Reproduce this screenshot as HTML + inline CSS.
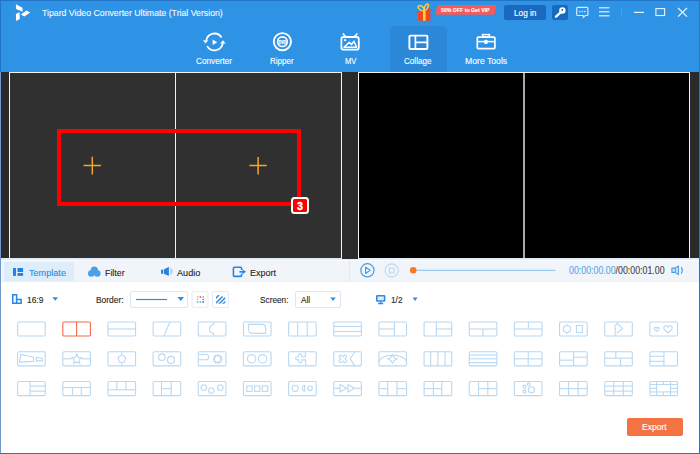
<!DOCTYPE html>
<html><head><meta charset="utf-8">
<style>
* { margin:0; padding:0; box-sizing:border-box; }
html, body { width:700px; height:454px; overflow:hidden; background:#fff; }
body { position:relative; font-family:"Liberation Sans", sans-serif; }
.abs { position:absolute; }
.t { position:absolute; white-space:nowrap; line-height:1; transform-origin:0 0; -webkit-text-stroke:0.12px currentColor; }
</style></head><body>
<!-- header -->
<div class="abs" style="left:0;top:0;width:700px;height:72px;background:#2f93e5"></div>
<div class="abs" style="left:0;top:0;width:700px;height:1px;background:#2274c9"></div>
<!-- active tab -->
<div class="abs" style="left:390px;top:26px;width:57px;height:46px;background:#2b87d8;border-radius:5px 5px 0 0"></div>

<!-- logo -->
<svg class="abs" style="left:0;top:0" width="40" height="26" viewBox="0 0 40 26">
 <g fill="#fff">
  <polygon points="15.9,4.2 22.4,7.8 22.7,11.8 16.1,9.1"/>
  <polygon points="20.8,14.4 26.4,10.5 30.3,12.6 24.3,16.5"/>
  <polygon points="15.9,13.9 19.5,12.0 19.8,18.9 16.1,21.0"/>
 </g>
</svg>
<div class="t" style="left:42.30px;top:8.95px;font-size:9.16px;color:#f2f8fe;transform:scaleX(0.954);">Tipard Video Converter Ultimate (Trial Version)</div>

<!-- gift + banner -->
<svg class="abs" style="left:410px;top:0" width="90" height="24" viewBox="410 0 90 24">
 <polygon points="437.3,5 496.7,5 494.4,14.8 435.4,14.8" fill="#f45b5b"/>
 <rect x="418" y="13" width="12.5" height="7.7" fill="#f5471f"/>
 <rect x="416.7" y="11" width="13" height="2.6" fill="#f5471f" transform="rotate(-4 423 12)"/>
 <path d="M425.5 11 l3.6 -3.4 l2.2 2.4 l-3.6 3z" fill="#f5471f"/>
 <rect x="423" y="10.5" width="2.6" height="10.2" fill="#fcd240"/>
 <ellipse cx="421.2" cy="8.2" rx="3.4" ry="1.9" transform="rotate(35 421.2 8.2)" fill="none" stroke="#fcd240" stroke-width="1.4"/>
 <ellipse cx="426.3" cy="7.0" rx="3.2" ry="1.6" transform="rotate(-62 426.3 7.0)" fill="none" stroke="#fcd240" stroke-width="1.4"/>
</svg>
<div class="t" style="left:440.60px;top:8.02px;font-size:5.52px;font-weight:bold;color:#fff;transform:scaleX(0.943);">50% OFF to Get VIP</div>

<!-- login + key -->
<div class="abs" style="left:504px;top:5px;width:42px;height:15px;background:#1a69bf;border-radius:2px"></div>
<div class="t" style="left:513.80px;top:9.02px;font-size:8.72px;color:#fff;transform:scaleX(0.943);">Log in</div>
<div class="abs" style="left:552px;top:5px;width:16px;height:15px;background:#1a69bf;border-radius:2px"></div>
<svg class="abs" style="left:548px;top:2px" width="22" height="22" viewBox="548 2 22 22">
 <path d="M560.6 12.4 L556.0 16.6" stroke="#fff" stroke-width="2.3" stroke-linecap="round"/>
 <circle cx="562.4" cy="10.5" r="3.2" fill="#fff"/>
 <circle cx="562.3" cy="10.0" r="0.9" fill="#1a69bf"/>
</svg>

<!-- chat, menu, sep, min, max, close -->
<svg class="abs" style="left:560px;top:0" width="140" height="26" viewBox="560 0 140 26" fill="none" stroke="#d6e8f9" stroke-width="1.2">
 <path d="M577.6 7.4 H587.0 Q587.9 7.4 587.9 8.3 V14.6 Q587.9 15.5 587.0 15.5 H585.2 L583.4 17.3 L583.2 15.5 H577.6 Q576.7 15.5 576.7 14.6 V8.3 Q576.7 7.4 577.6 7.4Z"/>
 <circle cx="579.7" cy="11.5" r="0.85" fill="#d6e8f9" stroke="none"/>
 <circle cx="582.3" cy="11.5" r="0.85" fill="#d6e8f9" stroke="none"/>
 <circle cx="584.9" cy="11.5" r="0.85" fill="#d6e8f9" stroke="none"/>
 <path d="M599 7.7 H609.5 M599 11.7 H609.5 M599 15.7 H609.5" stroke="#bfdbf5" stroke-width="1.4"/>
 <path d="M621.5 8 V16" stroke="#4f9fe6" stroke-width="1"/>
 <path d="M634 12.4 H644" stroke="#eaf4fd"/>
 <rect x="655.9" y="8.6" width="8.7" height="6.9" stroke="#eaf4fd" stroke-width="1.1"/>
 <path d="M678 8 L687 16.6 M687 8 L678 16.6" stroke="#eaf4fd"/>
</svg>

<!-- nav icons -->
<svg class="abs" style="left:180px;top:24px" width="340" height="32" viewBox="180 24 340 32" fill="none" stroke="#fff" stroke-width="1.7">
 <!-- converter -->
 <path d="M206.25 40.3 A8.4 8.4 0 0 1 221.6 37.45" stroke-width="1.8"/>
 <path d="M222.8 43.2 A8.4 8.4 0 0 1 207.2 46.1" stroke-width="1.8"/>
 <polygon points="203.0,40.2 208.2,40.2 205.5,43.6" fill="#fff" stroke="none"/>
 <polygon points="223.0,40.2 220.2,43.6 225.6,43.6" fill="#fff" stroke="none"/>
 <polygon points="212.6,39.5 217.3,42.2 212.6,44.9" fill="#fff" stroke="none"/>
 <!-- ripper -->
 <circle cx="282.4" cy="41.7" r="8.6" stroke-width="1.9"/>
 <circle cx="282.4" cy="41.7" r="4.8" stroke-width="1.7"/>
 <!-- mv -->
 <rect x="341.4" y="37" width="17.4" height="12.6" rx="2.2" stroke-width="1.8"/>
 <path d="M345.6 36.6 L342.8 33.6 M354.6 36.6 L357.4 33.6" stroke-width="1.5"/>
 <circle cx="345.1" cy="40.2" r="1.1" fill="#fff" stroke="none"/>
 <path d="M344 47.2 L349.3 42.3 L351.6 44.6 L354 41.2 L356.6 47.2 Z" stroke-width="1.5" stroke-linejoin="round"/>
 <!-- collage -->
 <rect x="409.4" y="35.6" width="18" height="13.4" rx="1" stroke-width="1.9"/>
 <path d="M415.4 35.6 V49 M415.4 42.4 H427.4" stroke-width="1.7"/>
 <!-- more tools -->
 <rect x="477.3" y="37.2" width="17.6" height="11.4" rx="1" stroke-width="1.7"/>
 <rect x="482.6" y="34.6" width="6.8" height="2.6" stroke-width="1.5"/>
 <path d="M477.3 41.6 H494.9" stroke-width="1.5"/>
 <rect x="484.2" y="39.8" width="3.4" height="4.2" rx="0.9" fill="#fff" stroke="none"/>
</svg>
<svg class="abs" style="left:277px;top:38px" width="11" height="8" viewBox="0 0 11 8">
 <text x="5.4" y="5.5" font-family="Liberation Sans" font-weight="bold" font-size="4.6" fill="#fff" stroke="#fff" stroke-width="0.25" text-anchor="middle" textLength="7.2" lengthAdjust="spacingAndGlyphs">DVD</text>
</svg>
<div class="t" style="left:195.70px;top:56.89px;font-size:8.87px;color:#fff;transform:scaleX(0.927);">Converter</div>
<div class="t" style="left:270.00px;top:56.89px;font-size:8.87px;color:#fff;transform:scaleX(0.907);">Ripper</div>
<div class="t" style="left:344.80px;top:56.89px;font-size:8.87px;color:#fff;transform:scaleX(0.857);">MV</div>
<div class="t" style="left:404.10px;top:56.89px;font-size:8.87px;color:#fff;transform:scaleX(0.915);">Collage</div>
<div class="t" style="left:465.00px;top:56.89px;font-size:8.87px;color:#fff;transform:scaleX(0.977);">More Tools</div>

<!-- preview area -->
<div class="abs" style="left:1px;top:72px;width:698px;height:187px;background:#2a2a2a"></div>
<div class="abs" style="left:9px;top:72px;width:333px;height:186px;background:#303030;border:1px solid #f4f4f4;border-bottom:none"></div>
<div class="abs" style="left:175px;top:73px;width:1px;height:185px;background:#f0f0f0"></div>
<div class="abs" style="left:358px;top:72px;width:332px;height:186px;background:#000;border:1px solid #f4f4f4;border-bottom:none"></div>
<div class="abs" style="left:523px;top:73px;width:2px;height:185px;background:#a8a8a8"></div>

<!-- red highlight -->
<div class="abs" style="left:57px;top:129px;width:244px;height:77px;border:4.6px solid #fe0000"></div>
<svg class="abs" style="left:0;top:100px" width="340" height="120" viewBox="0 100 340 120" stroke="#f5a623" stroke-width="1.5">
 <path d="M83.6 165.5 H101 M92.3 156.8 V174.4"/>
 <path d="M249.4 165.6 H266.8 M258.1 156.9 V174.5"/>
</svg>
<div class="abs" style="left:291.2px;top:196.8px;width:17.6px;height:17.4px;background:#fe0000;border:2px solid #fff;border-radius:3.5px"></div>
<div class="t" style="left:297.00px;top:201.69px;font-size:10.17px;font-weight:bold;color:#fff;transform:scaleX(1.061);-webkit-text-stroke:0.3px #fff;">3</div>

<!-- lower area -->
<div class="abs" style="left:0;top:258px;width:700px;height:2px;background:#e0edf8"></div><div class="abs" style="left:342px;top:258px;width:16px;height:1px;background:#2a2a2a"></div><div class="abs" style="left:0;top:260px;width:700px;height:1px;background:#f8fbfe"></div>
<div class="abs" style="left:0;top:261px;width:700px;height:20px;background:#f1f5fa"></div><div class="abs" style="left:0;top:281px;width:700px;height:1px;background:#e9f0f8"></div>
<div class="abs" style="left:4px;top:262px;width:70px;height:19px;background:#ddedfa"></div>
<div class="abs" style="left:349px;top:259px;width:1px;height:23px;background:#e2e9f2"></div>

<!-- tabs -->
<svg class="abs" style="left:0;top:260px" width="350" height="22" viewBox="0 260 350 22">
 <g fill="#1f84e6">
  <rect x="13" y="268" width="3" height="7.9"/>
  <rect x="17.5" y="268" width="5.6" height="4.0"/>
  <rect x="17.5" y="273" width="5.6" height="2.9"/>
 </g>
 <g fill="#49a0e6">
  <circle cx="94.3" cy="270.2" r="3.6"/>
  <circle cx="91.3" cy="273.5" r="3.3"/>
  <circle cx="97.3" cy="273.5" r="3.3"/>
 </g>
 <g fill="#2584e2">
  <rect x="161" y="269.7" width="2.1" height="4.0"/>
  <path d="M163.8 269.6 L168.9 266.8 V276.1 L163.8 273.8 Z"/>
 </g>
 <path d="M170.2 268.0 Q174.6 271.4 170.2 275.0 Q172.0 271.4 170.2 268.0Z" fill="#a6cff3" stroke="#a6cff3" stroke-width="0.6"/>
 <path d="M241.6 269.9 V268.3 Q241.6 267.3 240.6 267.3 H234.4 Q233.4 267.3 233.4 268.3 V275.4 Q233.4 276.4 234.4 276.4 H240.6 Q241.6 276.4 241.6 275.4 V273.8" stroke="#2587e6" stroke-width="1.6" fill="none"/>
 <path d="M239.4 271.85 H243.2" stroke="#2587e6" stroke-width="1.7"/>
 <polygon points="242.5,269.5 246.1,271.85 242.5,274.2" fill="#2587e6"/>
</svg>
<div class="t" style="left:29.00px;top:267.93px;font-size:9.88px;color:#2e8ae6;transform:scaleX(0.922);">Template</div>
<div class="t" style="left:105.30px;top:267.93px;font-size:9.88px;color:#262626;transform:scaleX(0.892);">Filter</div>
<div class="t" style="left:177.00px;top:267.93px;font-size:9.88px;color:#262626;transform:scaleX(0.922);">Audio</div>
<div class="t" style="left:249.80px;top:267.93px;font-size:9.88px;color:#262626;transform:scaleX(0.910);">Export</div>

<!-- player controls -->
<svg class="abs" style="left:350px;top:258px" width="350" height="24" viewBox="350 258 350 24" fill="none">
 <circle cx="367.4" cy="270.3" r="6.6" stroke="#4d9de2" stroke-width="1.2"/>
 <path d="M365.6 267.2 L370.2 270.3 L365.6 273.4 Z" stroke="#4d9de2" stroke-width="1.2" stroke-linejoin="round"/>
 <circle cx="391.7" cy="270.5" r="6.6" stroke="#bcd8f1" stroke-width="1.1"/>
 <rect x="389.3" y="268.1" width="4.8" height="4.8" stroke="#bcd8f1" stroke-width="1.1"/>
 <path d="M416 270.3 H555.5" stroke="#9ccbf1" stroke-width="1.2"/>
 <circle cx="413.2" cy="270.3" r="3.3" fill="#f97a25"/>
 <path d="M671.9 268.1 H675.2 L678.4 266.0 V274.6 L675.2 272.4 H671.9 Z" stroke="#4d9de2" stroke-width="1.1" stroke-linejoin="round" fill="#cfe5f8"/>
 <path d="M675.4 268.2 V272.3" stroke="#4d9de2" stroke-width="1"/>
 <path d="M681.2 267.2 Q683.4 270.3 681.2 273.6" stroke="#4d9de2" stroke-width="1.2"/>
</svg>
<div class="t" style="left:568.70px;top:265.81px;font-size:10.03px;color:#5aa5e6;transform:scaleX(0.880);">00:00:00.00<span style="color:#444">/00:00:01.00</span></div>

<!-- toolbar -->
<svg class="abs" style="left:0;top:285px" width="430" height="30" viewBox="0 285 430 30" fill="none">
 <path d="M12.75 294.75 H16.6 V299.4 H21.15 V303.15 H12.75 Z M16.6 299.4 V303.15" stroke="#2587e6" stroke-width="1.5"/>
 <polygon points="52.4,297.2 58,297.2 55.2,300.8" fill="#2e8ae6"/>
 <rect x="130.5" y="291.5" width="57" height="16" rx="1.5" fill="#fff" stroke="#dae7f4" stroke-width="1"/>
 <path d="M136 299.5 H167" stroke="#2e8ae6" stroke-width="1.2"/>
 <polygon points="177.4,296.9 184.0,296.9 180.7,300.9" fill="#2e8ae6"/>
 <rect x="192" y="291.5" width="16" height="16" rx="1.5" fill="#fff" stroke="#e4edf7" stroke-width="1"/>
 <rect x="212.5" y="291.5" width="16" height="16" rx="1.5" fill="#fff" stroke="#e4edf7" stroke-width="1"/>
 <rect x="295.5" y="291.5" width="45" height="16" rx="1.5" fill="#fff" stroke="#dae7f4" stroke-width="1"/>
 <polygon points="330.4,297.4 335.8,297.4 333.1,301" fill="#2e8ae6"/>
 <rect x="376.8" y="295.8" width="7.8" height="5.2" rx="0.5" fill="#e3f0fc" stroke="#2e8ae6" stroke-width="1.6"/>
 <path d="M380.7 301.6 V303.2 M378.2 303.5 H383.2" stroke="#2e8ae6" stroke-width="1.3"/>
 <polygon points="412.6,297.4 417.6,297.4 415.1,301" fill="#2e8ae6"/>
</svg>
<svg class="abs" style="left:192px;top:291px" width="37" height="17" viewBox="192 291 37 17">
 <rect x="196.8" y="296.2" width="1.6" height="1.6" fill="#f7c24a"/>
 <rect x="199.6" y="296.2" width="1.6" height="1.6" fill="#ee5a52"/>
 <rect x="202.4" y="296.2" width="1.6" height="1.6" fill="#d88ed8"/>
 <rect x="196.8" y="298.8" width="1.6" height="1.2" fill="#9ad26a"/>
 <rect x="202.4" y="298.8" width="1.6" height="1.2" fill="#8070c0"/>
 <rect x="196.8" y="301.2" width="1.6" height="1.6" fill="#6bc06a"/>
 <rect x="199.6" y="301.2" width="1.6" height="1.6" fill="#62a8f0"/>
 <rect x="202.4" y="301.2" width="1.6" height="1.6" fill="#5a68b8"/>
 <clipPath id="cp"><rect x="216" y="295" width="9.4" height="8.8"/></clipPath>
 <g clip-path="url(#cp)" stroke="#2e8ae6" stroke-width="1.5">
  <path d="M213 301 L219 295 M215.5 303.5 L222.5 296.5 M218.5 304.5 L225.5 297.5 M221.5 305.5 L227.5 299.5"/>
 </g>
</svg>
<div class="t" style="left:27.40px;top:295.82px;font-size:8.72px;color:#262626;transform:scaleX(0.960);">16:9</div>
<div class="t" style="left:96.30px;top:295.57px;font-size:9.01px;color:#262626;transform:scaleX(0.937);">Border:</div>
<div class="t" style="left:260.10px;top:295.57px;font-size:9.01px;color:#262626;transform:scaleX(0.918);">Screen:</div>
<div class="t" style="left:301.00px;top:295.57px;font-size:9.01px;color:#262626;transform:scaleX(0.919);">All</div>
<div class="t" style="left:391.20px;top:295.77px;font-size:9.01px;color:#262626;transform:scaleX(0.918);">1/2</div>

<svg class="abs" style="left:0;top:0" width="700" height="454" viewBox="0 0 700 454" fill="none" stroke-width="1.1"><g transform="translate(17.10 321.40)" stroke="#b9d8f2"><rect x="0.55" y="0.55" width="27.60" height="14.10" rx="1.2"/></g><g transform="translate(62.26 321.40)" stroke="#f4694a"><rect x="0.55" y="0.55" width="27.60" height="14.10" rx="1.2"/><path d="M14.35 0.55V14.65"/></g><g transform="translate(107.42 321.40)" stroke="#b9d8f2"><rect x="0.55" y="0.55" width="27.60" height="14.10" rx="1.2"/><path d="M0.55 7.60H28.15"/></g><g transform="translate(152.58 321.40)" stroke="#b9d8f2"><rect x="0.55" y="0.55" width="27.60" height="14.10" rx="1.2"/><path d="M17.3 0.55L11.4 14.649999999999999"/></g><g transform="translate(197.74 321.40)" stroke="#b9d8f2"><rect x="0.55" y="0.55" width="27.60" height="14.10" rx="1.2"/><path d="M15.6 0.55V3.3 A4.6 4.4 0 0 0 15.9 12.0 V14.649999999999999"/></g><g transform="translate(242.90 321.40)" stroke="#b9d8f2"><rect x="0.55" y="0.55" width="27.60" height="14.10" rx="1.2"/><path d="M5.6 3.0 H18.8 C21.2 3.0 22.8 4.6 22.8 6.6 V12.0 H9.6 C7.4 12.0 5.6 10.4 5.6 8.4 Z"/></g><g transform="translate(288.06 321.40)" stroke="#b9d8f2"><rect x="0.55" y="0.55" width="27.60" height="14.10" rx="1.2"/><path d="M9.57 0.55V14.65"/><path d="M19.13 0.55V14.65"/></g><g transform="translate(333.22 321.40)" stroke="#b9d8f2"><rect x="0.55" y="0.55" width="27.60" height="14.10" rx="1.2"/><path d="M0.55 5.07H28.15"/><path d="M0.55 10.13H28.15"/></g><g transform="translate(378.38 321.40)" stroke="#b9d8f2"><rect x="0.55" y="0.55" width="27.60" height="14.10" rx="1.2"/><path d="M16.00 0.55V14.65"/><path d="M0.55 7.60H16.00"/></g><g transform="translate(423.54 321.40)" stroke="#b9d8f2"><rect x="0.55" y="0.55" width="27.60" height="14.10" rx="1.2"/><path d="M12.80 0.55V14.65"/><path d="M12.80 7.60H28.15"/></g><g transform="translate(468.70 321.40)" stroke="#b9d8f2"><rect x="0.55" y="0.55" width="27.60" height="14.10" rx="1.2"/><path d="M0.55 7.60H28.15"/><path d="M14.20 7.60V14.65"/></g><g transform="translate(513.86 321.40)" stroke="#b9d8f2"><rect x="0.55" y="0.55" width="27.60" height="14.10" rx="1.2"/><path d="M0.55 7.60H28.15"/><path d="M14.50 0.55V7.60"/></g><g transform="translate(559.02 321.40)" stroke="#b9d8f2"><rect x="0.55" y="0.55" width="27.60" height="14.10" rx="1.2"/><polygon points="7.90,3.60 11.36,5.60 11.36,9.60 7.90,11.60 4.44,9.60 4.44,5.60"/><rect x="17.4" y="4.1" width="6.0" height="7.0"/></g><g transform="translate(604.18 321.40)" stroke="#b9d8f2"><rect x="0.55" y="0.55" width="27.60" height="14.10" rx="1.2"/><path d="M13.3 0.55 V2.6 L18.4 7.0 L12.4 12.0 M13.3 2.6 C10.2 3.6 10.2 6.6 11.6 7.6 C10.6 9.2 11.0 11.0 11.0 12.2 V14.649999999999999"/></g><g transform="translate(649.34 321.40)" stroke="#b9d8f2"><rect x="0.55" y="0.55" width="27.60" height="14.10" rx="1.2"/><path d="M7.40 10.10 C6.65 9.50 4.90 8.25 4.90 7.25 C4.90 5.75 6.90 5.50 7.40 6.90 C7.90 5.50 9.90 5.75 9.90 7.25 C9.90 8.25 8.15 9.50 7.40 10.10Z"/><path d="M18.60 11.51 C17.31 10.48 14.30 8.33 14.30 6.61 C14.30 4.03 17.74 3.60 18.60 6.01 C19.46 3.60 22.90 4.03 22.90 6.61 C22.90 8.33 19.89 10.48 18.60 11.51Z"/></g><g transform="translate(17.10 351.20)" stroke="#b9d8f2"><rect x="0.55" y="0.55" width="27.60" height="14.10" rx="1.2"/><path d="M3.8 3.0 L16.4 6.1 V10.2 L2.5 10.9 Z" stroke-linejoin="round"/><path d="M19.2 6.1 L25.4 7.4 V9.7 H19.2 Z"/></g><g transform="translate(62.26 351.20)" stroke="#b9d8f2"><rect x="0.55" y="0.55" width="27.60" height="14.10" rx="1.2"/><path d="M0.55 7.60H9.40"/><path d="M19.60 7.60H28.15"/><polygon points="14.50,2.80 15.97,5.98 19.45,6.39 16.88,8.77 17.56,12.21 14.50,10.50 11.44,12.21 12.12,8.77 9.55,6.39 13.03,5.98"/></g><g transform="translate(107.42 351.20)" stroke="#b9d8f2"><rect x="0.55" y="0.55" width="27.60" height="14.10" rx="1.2"/><path d="M14.35 0.55V3.40"/><path d="M14.35 11.60V14.65"/><polygon points="14.50,3.70 18.40,6.53 16.91,11.12 12.09,11.12 10.60,6.53"/></g><g transform="translate(152.58 351.20)" stroke="#b9d8f2"><rect x="0.55" y="0.55" width="27.60" height="14.10" rx="1.2"/><circle cx="9.3" cy="6.0" r="3.3"/><circle cx="18.4" cy="8.7" r="3.5"/></g><g transform="translate(197.74 351.20)" stroke="#b9d8f2"><rect x="0.55" y="0.55" width="27.60" height="14.10" rx="1.2"/><path d="M0.55 3.3 H8.4 A2.6 2.6 0 0 1 8.4 8.5 H0.55"/><polygon points="19.90,3.50 20.70,4.91 22.10,4.09 22.09,5.71 23.71,5.70 22.89,7.10 24.30,7.90 22.89,8.70 23.71,10.10 22.09,10.09 22.10,11.71 20.70,10.89 19.90,12.30 19.10,10.89 17.70,11.71 17.71,10.09 16.09,10.10 16.91,8.70 15.50,7.90 16.91,7.10 16.09,5.70 17.71,5.71 17.70,4.09 19.10,4.91"/></g><g transform="translate(242.90 351.20)" stroke="#b9d8f2"><rect x="0.55" y="0.55" width="27.60" height="14.10" rx="1.2"/><circle cx="8.7" cy="7.6" r="4.2"/><circle cx="19.7" cy="7.6" r="4.2"/></g><g transform="translate(288.06 351.20)" stroke="#b9d8f2"><rect x="0.55" y="0.55" width="27.60" height="14.10" rx="1.2"/><path d="M17.3 0.55 V5.5 H13.8 V4.3 A1.6 1.6 0 0 0 10.6 4.3 V5.5 H9.2 A1.6 1.6 0 0 0 9.2 8.7 H10.6 V10.1 A1.6 1.6 0 0 0 13.8 10.1 V8.7 H17.6 V14.649999999999999"/></g><g transform="translate(333.22 351.20)" stroke="#b9d8f2"><rect x="0.55" y="0.55" width="27.60" height="14.10" rx="1.2"/><g transform="rotate(45 9.6 7.6)"><path d="M8.10 4.50 A1.50 1.50 0 0 1 11.10 4.50 V6.10 H12.70 A1.50 1.50 0 0 1 12.70 9.10 H11.10 V10.70 A1.50 1.50 0 0 1 8.10 10.70 V9.10 H6.50 A1.50 1.50 0 0 1 6.50 6.10 H8.10Z"/></g><path d="M21.6 0.55 L17.0 7.6 L21.6 14.649999999999999"/></g><g transform="translate(378.38 351.20)" stroke="#b9d8f2"><rect x="0.55" y="0.55" width="27.60" height="14.10" rx="1.2"/><path d="M0.55 11.4 A13.75 7.4 0 0 1 28.15 11.4"/><path d="M14.10 3.10 Q15.00 6.90 19.20 7.80 Q15.00 8.70 14.10 12.50 Q13.20 8.70 9.00 7.80 Q13.20 6.90 14.10 3.10Z"/></g><g transform="translate(423.54 351.20)" stroke="#b9d8f2"><rect x="0.55" y="0.55" width="27.60" height="14.10" rx="1.2"/><path d="M7.17 0.55V14.65"/><path d="M14.35 0.55V14.65"/><path d="M21.52 0.55V14.65"/></g><g transform="translate(468.70 351.20)" stroke="#b9d8f2"><rect x="0.55" y="0.55" width="27.60" height="14.10" rx="1.2"/><path d="M0.55 3.80H28.15"/><path d="M0.55 7.60H28.15"/><path d="M0.55 11.40H28.15"/></g><g transform="translate(513.86 351.20)" stroke="#b9d8f2"><rect x="0.55" y="0.55" width="27.60" height="14.10" rx="1.2"/><path d="M14.35 0.55V14.65"/><path d="M0.55 7.60H28.15"/></g><g transform="translate(559.02 351.20)" stroke="#b9d8f2"><rect x="0.55" y="0.55" width="27.60" height="14.10" rx="1.2"/><path d="M14.60 0.55V14.65"/><path d="M0.55 9.00H14.60"/><path d="M14.60 6.00H28.15"/></g><g transform="translate(604.18 351.20)" stroke="#b9d8f2"><rect x="0.55" y="0.55" width="27.60" height="14.10" rx="1.2"/><path d="M0.55 7.00H28.15"/><path d="M11.60 0.55V7.00"/><path d="M16.40 7.00V14.65"/></g><g transform="translate(649.34 351.20)" stroke="#b9d8f2"><rect x="0.55" y="0.55" width="27.60" height="14.10" rx="1.2"/><path d="M14.60 0.55V14.65"/><path d="M0.55 5.07H14.60"/><path d="M0.55 10.13H14.60"/></g><g transform="translate(17.10 381.00)" stroke="#b9d8f2"><rect x="0.55" y="0.55" width="27.60" height="14.10" rx="1.2"/><path d="M13.00 0.55V14.65"/><path d="M13.00 5.07H28.15"/><path d="M13.00 10.13H28.15"/></g><g transform="translate(62.26 381.00)" stroke="#b9d8f2"><rect x="0.55" y="0.55" width="27.60" height="14.10" rx="1.2"/><path d="M0.55 6.50H28.15"/><path d="M10.20 6.50V14.65"/><path d="M19.00 6.50V14.65"/></g><g transform="translate(107.42 381.00)" stroke="#b9d8f2"><rect x="0.55" y="0.55" width="27.60" height="14.10" rx="1.2"/><path d="M0.55 8.80H28.15"/><path d="M9.40 0.55V8.80"/><path d="M18.50 0.55V8.80"/></g><g transform="translate(152.58 381.00)" stroke="#b9d8f2"><rect x="0.55" y="0.55" width="27.60" height="14.10" rx="1.2"/><path d="M8.90 0.55V14.65"/><path d="M18.60 0.55V14.65"/><path d="M8.90 7.60H18.60"/></g><g transform="translate(197.74 381.00)" stroke="#b9d8f2"><rect x="0.55" y="0.55" width="27.60" height="14.10" rx="1.2"/><polygon points="9.10,6.60 7.60,9.20 4.60,9.20 3.10,6.60 4.60,4.00 7.60,4.00"/><polygon points="16.50,9.60 15.00,12.20 12.00,12.20 10.50,9.60 12.00,7.00 15.00,7.00"/><polygon points="25.60,6.60 24.10,9.20 21.10,9.20 19.60,6.60 21.10,4.00 24.10,4.00"/></g><g transform="translate(242.90 381.00)" stroke="#b9d8f2"><rect x="0.55" y="0.55" width="27.60" height="14.10" rx="1.2"/><rect x="3.8" y="5.0" width="5.4" height="5.4"/><rect x="11.6" y="5.0" width="5.4" height="5.4"/><rect x="19.4" y="5.0" width="5.4" height="5.4"/></g><g transform="translate(288.06 381.00)" stroke="#b9d8f2"><rect x="0.55" y="0.55" width="27.60" height="14.10" rx="1.2"/><circle cx="7.1" cy="7.3" r="3.1"/><path d="M16.6 4.3 A3.0 3.0 0 0 0 16.6 10.2 Z"/><circle cx="22.0" cy="7.3" r="2.3"/></g><g transform="translate(333.22 381.00)" stroke="#b9d8f2"><rect x="0.55" y="0.55" width="27.60" height="14.10" rx="1.2"/><path d="M0.55 7.30H6.80"/><path d="M13.40 7.30H14.70"/><path d="M21.20 7.30H28.15"/><path d="M6.8 3.5 L13.4 7.3 L6.8 11.0 Z M14.7 3.5 L21.2 7.3 L14.7 11.0 Z" stroke-linejoin="round"/></g><g transform="translate(378.38 381.00)" stroke="#b9d8f2"><rect x="0.55" y="0.55" width="27.60" height="14.10" rx="1.2"/><path d="M9.30 0.55V14.65"/><path d="M18.60 0.55V14.65"/><path d="M0.55 7.60H9.30"/><path d="M18.60 7.60H28.15"/></g><g transform="translate(423.54 381.00)" stroke="#b9d8f2"><rect x="0.55" y="0.55" width="27.60" height="14.10" rx="1.2"/><path d="M9.80 0.55V14.65"/><path d="M18.20 0.55V14.65"/><path d="M0.55 7.60H18.20"/></g><g transform="translate(468.70 381.00)" stroke="#b9d8f2"><rect x="0.55" y="0.55" width="27.60" height="14.10" rx="1.2"/><path d="M9.80 0.55V14.65"/><path d="M19.10 0.55V14.65"/><path d="M9.80 7.60H28.15"/></g><g transform="translate(513.86 381.00)" stroke="#b9d8f2"><rect x="0.55" y="0.55" width="27.60" height="14.10" rx="1.2"/><circle cx="10.6" cy="5.6" r="1.5"/><circle cx="14.9" cy="3.3" r="1.4"/><circle cx="10.6" cy="10.6" r="1.5"/><circle cx="17.6" cy="8.8" r="3.0"/></g><g transform="translate(559.02 381.00)" stroke="#b9d8f2"><rect x="0.55" y="0.55" width="27.60" height="14.10" rx="1.2"/><path d="M9.57 0.55V14.65"/><path d="M19.13 0.55V14.65"/><path d="M0.55 7.60H28.15"/></g><g transform="translate(604.18 381.00)" stroke="#b9d8f2"><rect x="0.55" y="0.55" width="27.60" height="14.10" rx="1.2"/><path d="M9.57 0.55V14.65"/><path d="M19.13 0.55V14.65"/><path d="M0.55 5.07H28.15"/><path d="M0.55 10.13H28.15"/></g><g transform="translate(649.34 381.00)" stroke="#b9d8f2"><rect x="0.55" y="0.55" width="27.60" height="14.10" rx="1.2"/><path d="M7.20 0.55V14.65"/><path d="M21.20 0.55V14.65"/><path d="M0.55 3.50H28.15"/><path d="M0.55 10.90H28.15"/><path d="M0.55 7.40H7.20"/><path d="M21.20 7.40H28.15"/><path d="M14.00 0.55V3.50"/><path d="M14.00 10.90V14.65"/></g></svg>

<!-- export button -->
<div class="abs" style="left:627px;top:418px;width:56px;height:18px;background:#f37342;border-radius:2px"></div>
<div class="t" style="left:642.20px;top:423.17px;font-size:9.01px;color:#fff;transform:scaleX(0.948);">Export</div>

<!-- window borders -->
<div class="abs" style="left:0;top:72px;width:1px;height:382px;background:#7399cc"></div>
<div class="abs" style="left:0;top:0;width:1px;height:72px;background:#2274c9"></div>
<div class="abs" style="left:699px;top:0;width:1px;height:454px;background:#3070bc"></div>
<div class="abs" style="left:0;top:453px;width:700px;height:1px;background:#3070bc"></div>
</body></html>
